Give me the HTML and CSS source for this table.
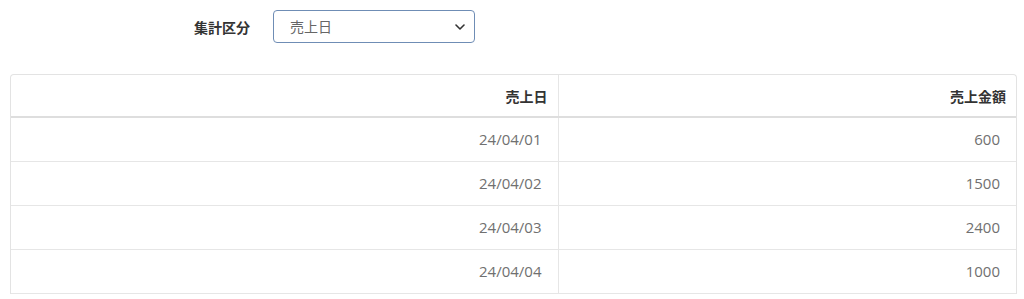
FILE: index.html
```html
<!DOCTYPE html>
<html lang="ja">
<head>
    <meta charset="UTF-8">
    <title>売上集計</title>
    <link rel="stylesheet" href="styles.css">
</head>
<body>
    <div class="page">
        <form class="filter-row">
            <label class="filter-label" for="groupBy">集計区分</label>
            <div class="select-wrap">
                <select id="groupBy" class="filter-select">
                    <option>売上日</option>
                    <option>売上月</option>
                </select>
                <svg class="select-arrow" width="10" height="6" viewBox="0 0 10 6">
                    <path d="M1 1 L5 5 L9 1" fill="none" stroke="#333" stroke-width="1.6" stroke-linecap="round" stroke-linejoin="round"/>
                </svg>
            </div>
        </form>

        <div class="table-box">
            <table class="sales-table">
                <thead>
                    <tr>
                        <th class="col-date">売上日</th>
                        <th>売上金額</th>
                    </tr>
                </thead>
                <tbody>
                    <tr><td>24/04/01</td><td>600</td></tr>
                    <tr><td>24/04/02</td><td>1500</td></tr>
                    <tr><td>24/04/03</td><td>2400</td></tr>
                    <tr><td>24/04/04</td><td>1000</td></tr>
                </tbody>
            </table>
        </div>
    </div>
</body>
</html>
```

FILE: styles.css
```css
/* 売上集計画面 */
* { box-sizing: border-box; }

body {
    margin: 0;
    background: #fff;
    color: #555;
    font-family: "Open Sans", "Noto Sans CJK JP", sans-serif;
    font-size: 14px;
}

.page {
    padding: 10px 7px 0 10px;
}

/* 集計区分 */
.filter-row {
    display: grid;
    grid-template-columns: 240px 202px;
    column-gap: 23px;
    align-items: center;
    margin: 0 0 31px 0;
}

.filter-label {
    text-align: right;
    font-weight: bold;
    color: #333;
}

.select-wrap {
    position: relative;
}

.filter-select {
    display: block;
    width: 202px;
    height: 33px;
    padding: 0 28px 0 16px;
    border: 1px solid #6f8db5;
    border-radius: 4px;
    background: #fff;
    color: #666;
    font-family: inherit;
    font-size: 14px;
    appearance: none;
    -webkit-appearance: none;
}

.select-arrow {
    position: absolute;
    right: 10px;
    top: 14px;
    pointer-events: none;
}

/* 一覧 */
.table-box {
    border: 1px solid #e3e3e3;
    border-bottom: none;
    border-radius: 4px 4px 0 0;
    overflow: hidden;
}

.sales-table {
    width: 100%;
    border-collapse: collapse;
}

.sales-table th,
.sales-table td {
    height: 44px;
    text-align: right;
    border-bottom: 1px solid #e6e6e6;
}

.sales-table th {
    height: 42px;
    padding: 0 10px;
    color: #333;
    font-weight: 600;
    border-bottom: 2px solid #dedede;
}

.sales-table td {
    padding: 0 16px;
    color: #707070;
    font-size: 15px;
}

.col-date,
.sales-table td:first-child {
    width: 547px;
    border-right: 1px solid #e6e6e6;
}
```
